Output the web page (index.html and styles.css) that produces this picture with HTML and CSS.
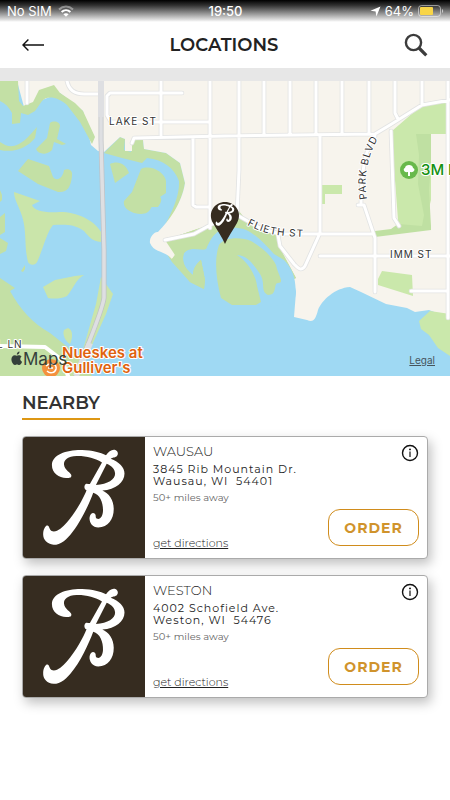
FILE: index.html
```html
<!DOCTYPE html>
<html lang="en">
<head>
    <meta charset="UTF-8">
    <meta name="viewport" content="width=device-width, initial-scale=1.0">
    <title>Locations</title>
    <link rel="stylesheet" href="styles.css">
</head>
<body>
    <svg class="defs" aria-hidden="true">
        <symbol id="logo" viewBox="9 23 363 363">
            <path fill-rule="evenodd" d="M152 144C128 153 95 138 95 108C95 76 140 62 185 63C215 64 240 70 256 79C264 67 274 60 284 63C292 66 293 76 289 80C285 86 276 84 270 89C295 98 311 115 311 133C311 160 285 180 245 184C264 192 279 212 279 238C279 270 262 293 233 294C215 294 206 278 207 265C208 252 217 248 222 252C228 257 223 262 228 267C238 272 246 262 247 245C248 220 238 195 218 190C205 225 180 280 150 315C130 338 115 346 100 345C80 343 68 330 69 312C70 299 75 290 80 288C88 286 86 299 94 304C108 310 125 295 140 278C165 250 190 205 198 183C190 180 190 168 196 164C200 162 204 165 208 164L244 100C225 88 195 80 168 81C142 82 130 93 131 106C132 124 153 130 153 139ZM258 104L226 167C262 165 283 151 283 134C283 120 272 110 258 104Z"/>
        </symbol>
        <symbol id="info" viewBox="0 0 18 18">
            <circle cx="9" cy="9" r="7.5" fill="none" stroke="#111" stroke-width="1.4"/>
            <circle cx="9" cy="5.4" r="0.9"/>
            <path d="M9 7.6V13" stroke="#111" stroke-width="1.2"/>
        </symbol>
    </svg>

    <div class="status-bar">
        <div class="carrier">
            <span>No SIM</span>
            <svg width="16" height="12" viewBox="0 0 16 12" fill="none" stroke="#fff" stroke-width="2">
                <path d="M1 4.4C5 .6 11 .6 15 4.4" opacity=".4"/>
                <path d="M3.6 7C6.2 4.6 9.8 4.6 12.4 7"/>
                <path d="M8 11.8L5.4 9.2C6.8 7.8 9.2 7.8 10.6 9.2Z" fill="#fff" stroke="none"/>
            </svg>
        </div>
        <div class="time">19:50</div>
        <div class="battery">
            <svg width="11" height="11" viewBox="0 0 11 11"><path d="M10.5 .5L6.4 10.6L5.6 5.6L.5 4.8Z" fill="#fff"/></svg>
            <span>64%</span>
            <svg width="26" height="12" viewBox="0 0 26 12">
                <rect x=".5" y=".5" width="22" height="11" rx="3" fill="none" stroke="#fff" stroke-opacity=".5"/>
                <rect x="2" y="2" width="13" height="8" rx="1" fill="#f8d548"/>
                <path d="M24 4C25.6 4.6 25.6 7.4 24 8Z" fill="#fff" opacity=".6"/>
            </svg>
        </div>
    </div>

    <header class="header">
        <button type="button" class="icon-btn" aria-label="Back">
            <svg width="22" height="12" viewBox="0 0 22 12" fill="none" stroke="#111" stroke-width="1.4"><path d="M22 6H1M6.4 .6L1 6L6.4 11.4"/></svg>
        </button>
        <h1>LOCATIONS</h1>
        <button type="button" class="icon-btn" aria-label="Search">
            <svg width="24" height="24" viewBox="0 0 24 24" fill="none" stroke="#3c3c3c"><circle cx="9.5" cy="9.5" r="7.6" stroke-width="2.4"/><path d="M15 15L22.3 22.3" stroke-width="3.2"/></svg>
        </button>
    </header>

    <div class="map">
        <svg viewBox="0 81 450 295">
            <rect y="81" width="450" height="295" fill="#9fd9f3"/>

            <!-- north-west shore -->
            <path fill="#f7f4ed" d="M17 81H104V152L98 151L91 145L83 111L60 93L24 107Z"/>
            <g fill="#c3e0a5">
                <path d="M0 81H18L19 101L23 106L33 102L39 90L54 85L60 93L75 103L83 111L95 137L92 144L80 122L67 105C58 97 47 95 42 101L35 111L28 115L21 113L20 123L12 124L12 113C9 107 5 103 0 101Z"/>
                <path d="M0 142C15 153 26 140 37 127L35 138C27 148 14 153 0 150Z"/>
                <path d="M50 123C54 120 60 122 60 126L57 139L66 144L62 145L54 142L52 150C46 156 38 154 36 149L47 138Z"/>
                <path d="M28 159L49 166L53 177C57 182 63 178 64 170C69 168 73 171 72 176C71 187 67 193 58 192L38 184L18 171Z"/>
                <path d="M0 190L2 195V200L0 202ZM0 217L5 213V232L0 235ZM0 238L8 243L6 251L0 254Z"/>
                <path d="M110 164C118 160 126 164 129 173L115 183Z"/>
                <path d="M141 169C150 164 165 172 166 181V193L157 199L151 208C148 214 143 215 134 213C126 210 123 206 124 201L132 192ZM157 196C163 196 162 202 158 207L151 207C155 203 155 199 157 196Z"/>
                <path d="M21 271L25 265V269L23 272Z"/>
                <path d="M0 278L15 288L10 291C20 309 32 323 50 333L84 360L92 376H0Z"/>
            </g>
            <g fill="#cae5aa">
                <path d="M14 192L40 201L32 205C34 211 45 213 60 212C77 212 94 220 101 232V242C92 241 89 237 84 231C73 223 62 225 53 225C47 232 44 246 38 260C36 266 30 266 28 262C24 247 27 231 22 216C18 204 14 199 14 192Z"/>
                <path d="M43 287L55 280L75 276L84 275C75 280 74 288 67 296C61 299 53 299 48 298Z"/>
                <path d="M68 328C73 330 73 337 70 344C66 342 62 335 64 330Z"/>
                <path d="M101 277L113 294L106 314L88 354L80 360L96 304Z"/>
            </g>

            <!-- main land -->
            <path fill="#c3e0a5" d="M104 153L120 137L125 139L124 150L131 152L132 140L143 140L144 149L166 153L180 163L185 183C182 203 170 221 158 236L167 230L215 215L250 214L272 228L294 260L300 285L288 285L278 269L272 254C260 241 245 229 233 228C216 228 212 236 206 249C198 251 190 246 184 253C180 264 189 272 193 275C193 269 196 264 201 260L205 280L204 289L190 282L172 262L158 240C163 226 180 203 179 181C174 168 164 160 147 158L142 163L122 158Z"/>
            <path fill="#f7f4ed" d="M104 81H450V318L429 310L415 312L407 308L386 304L361 292L350 287C335 288 322 300 318 310C315 322 312 322 307 320L294 317L296 292L293 279L296 278L286 260L276 244L238 217L212 224L165 240L172 247L175 255L172 259C164 250 154 253 150 243C149 237 155 231 158 232C169 221 182 203 185 183L180 163L166 153L144 149L143 140L132 140V151H125V139L120 137L104 152Z"/>
            <path fill="#c3e0a5" d="M165 240L212 224L238 210L248 222L276 232L280 248L296 278L292 280L282 259L272 253C262 240 248 228 233 228C216 228 212 236 206 249C198 250 190 246 184 253C180 264 189 272 193 275C193 269 196 264 201 260L205 280L204 289L190 282L172 259L175 255Z"/>
            <path fill="#9fd9f3" d="M231 228C249 225 263 242 274 254L284 260C296 272 295 284 296 292L294 303L270 307L260 307L245 290L225 245Z"/>
            <path fill="#c3e0a5" d="M219 245C225 237 241 237 251 241C261 247 272 256 276 265C278 275 285 283 278 283C273 283 278 295 268 295C260 291 266 284 260 274C252 262 246 255 237 255C247 261 256 275 257 286L261 302L256 305L232 305L221 298C216 279 214 259 219 245Z"/>

            <!-- parks -->
            <path fill="#cae8ab" d="M392 131L422 105L450 100V134H431V200L424 228L395 230L398 220L392 140Z"/>
            <path fill="#bfe0a2" d="M416 134H431V162L429 190L431 226V230L375 237V231L391 229L398 224L422 226L424 215L418 184L419 155Z"/>
            <path fill="#cae8ab" d="M322 185H342V194H325V204H322ZM382 271L412 275L413 296L378 285V279ZM430 311L450 314V356L438 348L429 335L421 329L419 321Z"/>

            <!-- roads -->
            <g fill="none" stroke-linecap="round" stroke-linejoin="round">
                <path stroke="#e2e3e3" stroke-width="4.6" d="M27 81V103M67 81C69 91 76 94 84 94H99M182 93H110L107 96V115L111 122H210M161 81V135M210 81V228M132 143L134 138L225 136L375 134L390 125L422 105L450 100M193 137V205L196 207H210M239 81V170L237 215M264 81V135M290 81V134M316 81V134M342 81V134M369 81V134M395 81V113L398 119M422 81V105M448 81V318M320 135V233L305 266C301 272 298 268 294 264L280 246L278 235M375 136C364 148 361 181 361 203M358 205H364L375 238V292M391 131L394 218L399 226M165 240L194 234L212 224L237 215L260 228L280 234H373M320 256H450M411 291H447"/>
                <path stroke="#fff" stroke-width="3" d="M27 81V103M67 81C69 91 76 94 84 94H99M182 93H110L107 96V115L111 122H210M161 81V135M210 81V228M132 143L134 138L225 136L375 134L390 125L422 105L450 100M193 137V205L196 207H210M239 81V170L237 215M264 81V135M290 81V134M316 81V134M342 81V134M369 81V134M395 81V113L398 119M422 81V105M448 81V318M320 135V233L305 266C301 272 298 268 294 264L280 246L278 235M375 136C364 148 361 181 361 203M358 205H364L375 238V292M391 131L394 218L399 226M165 240L194 234L212 224L237 215L260 228L280 234H373M320 256H450M411 291H447"/>
                <path stroke="#fff" stroke-width="4" d="M0 346L45 347L62 360L68 376"/>
                <path stroke="#bfc2c6" stroke-width="5" d="M101 81V140L104 250V298C102 312 92 333 76 376"/>
                <path stroke="#dedfe2" stroke-width="3.5" d="M101 81V140L104 250V298C102 312 92 333 76 376"/>
                <path stroke="#dedfe2" stroke-width="6" stroke-linecap="butt" d="M101 81V117M90 343L76 376"/>
            </g>

            <!-- labels -->
            <path id="park-blvd" d="M367 199C363 178 368 152 381 134" fill="none"/>
            <path id="flieth" d="M247 225C262 233 276 237 310 237" fill="none"/>
            <g class="street">
                <text x="109" y="125">LAKE ST</text>
                <text x="390" y="258">IMM ST</text>
                <text x="-3" y="348">L LN</text>
                <text><textPath href="#park-blvd">PARK BLVD</textPath></text>
                <text><textPath href="#flieth">FLIETH ST</textPath></text>
            </g>
            <circle cx="409" cy="170" r="9" fill="#68b94b"/>
            <path d="M408 176V172C403 173 403 168 405 168C405 164 413 164 413 168C416 169 414 173 410 172V176Z" fill="#fff"/>
            <text class="park" x="421" y="175">3M Park</text>

            <circle cx="51" cy="368" r="9" fill="#f4913e"/>
            <path d="M46 366C51 362 57 364 56 369C55 373 50 374 47 371M48 368H53" fill="none" stroke="#fff" stroke-width="1.5"/>
            <text class="place" x="62" y="358">Nueskes at</text>
            <text class="place" x="62" y="373">Gulliver's</text>

            <path fill="#34403a" d="M21.6 356.5C20.6 355.2 19.2 355 18.4 355.2C17.6 355.4 17.2 355.7 16.8 355.7C16.4 355.7 15.8 355.2 14.9 355.2C12.8 355.2 11.4 357 11.4 359.3C11.4 362 13.2 365 14.8 365C15.6 365 16 364.5 17 364.5C18 364.5 18.2 365 19.1 365C20.4 365 21.6 363.2 22.1 361.7C19.8 360.6 19.8 357.8 21.6 356.5ZM16.8 354.6C16.7 352.9 18 351.6 19.5 351.4C19.7 353.1 18.4 354.5 16.8 354.6Z"/>
            <text class="maps" x="23" y="365">Maps</text>

            <!-- store pin -->
            <path fill="#362c20" d="M225 244C222 237 217 230 213 223C207 212 215 202 225 202C235 202 243 212 237 223C233 230 228 237 225 244Z"/>
            <use href="#logo" x="211" y="201" width="28" height="28" fill="#fff"/>
        </svg>
        <a href="#legal" class="legal">Legal</a>
    </div>

    <main class="nearby">
        <h2>NEARBY</h2>

        <article class="card">
            <svg class="logo" viewBox="0 0 121 121" preserveAspectRatio="xMidYMid slice"><use href="#logo" width="121" height="121"/></svg>
            <div class="info">
                <h3>WAUSAU</h3>
                <address>3845 Rib Mountain Dr.<br>Wausau, WI&nbsp; 54401</address>
                <p>50+ miles away</p>
                <a href="#directions-wausau">get directions</a>
            </div>
            <div class="actions">
                <button type="button" class="icon-btn" aria-label="Store info"><svg width="18" height="18"><use href="#info"/></svg></button>
                <button type="button" class="order-btn">ORDER</button>
            </div>
        </article>

        <article class="card">
            <svg class="logo" viewBox="0 0 121 121" preserveAspectRatio="xMidYMid slice"><use href="#logo" width="121" height="121"/></svg>
            <div class="info">
                <h3>WESTON</h3>
                <address>4002 Schofield Ave.<br>Weston, WI&nbsp; 54476</address>
                <p>50+ miles away</p>
                <a href="#directions-weston">get directions</a>
            </div>
            <div class="actions">
                <button type="button" class="icon-btn" aria-label="Store info"><svg width="18" height="18"><use href="#info"/></svg></button>
                <button type="button" class="order-btn">ORDER</button>
            </div>
        </article>
    </main>
</body>
</html>
```
FILE: styles.css
```css
* {
    padding: 0;
    margin: 0;
    box-sizing: border-box;
}
body {
    font-family: Montserrat, Inter, sans-serif;
    background: #fff;
    color: #222;
}
button {
    font-family: inherit;
    background: none;
    border: none;
    cursor: pointer;
}
svg {
    display: block;
}
.defs {
    position: absolute;
    width: 0;
    height: 0;
}
.status-bar {
    height: 22px;
    padding: 0 6px 0 7px;
    display: grid;
    grid-template-columns: 1fr auto 1fr;
    align-items: center;
    background: linear-gradient(#000, #333 25%, #e0e0e0 90%, #fff);
    color: #fff;
    font: 13px Inter, sans-serif;
}
.carrier, .battery {
    display: flex;
    align-items: center;
    gap: 6px;
}
.battery {
    justify-content: flex-end;
    gap: 4px;
}
.time {
    font-weight: 500;
}
.header {
    height: 46px;
    padding: 0 22px;
    display: flex;
    align-items: center;
    justify-content: space-between;
}
.header h1 {
    font-size: 18px;
    font-weight: 600;
}
.map {
    position: relative;
    border-top: 13px solid #e7e7e7;
}
.map > svg {
    width: 100%;
    height: auto;
}
.map text {
    font-family: Inter, sans-serif;
    paint-order: stroke;
    stroke: #fff;
    stroke-width: 2px;
    stroke-linejoin: round;
}
.map .street {
    font-size: 10px;
    letter-spacing: 1px;
    fill: #333;
}
.map .park {
    font-size: 15px;
    font-weight: 500;
    fill: #149013;
}
.map .place {
    font-size: 15px;
    font-weight: 600;
    fill: #e0620d;
}
.map .maps {
    font-size: 17px;
    fill: #34403a;
    stroke: none;
}
.legal {
    position: absolute;
    right: 15px;
    bottom: 10px;
    color: #46545c;
    font: 10px Inter, sans-serif;
}
.nearby {
    padding: 14px 22px;
}
.nearby h2 {
    width: max-content;
    margin-bottom: 16px;
    padding-bottom: 2px;
    border-bottom: 2px solid #dd9714;
    font-size: 18px;
    font-weight: 600;
    line-height: 26px;
    color: #333;
}
.card {
    display: flex;
    height: 123px;
    margin-bottom: 16px;
    overflow: hidden;
    background: #fff;
    border: 1px solid #aaa;
    border-radius: 4px;
    box-shadow: 3px 5px 12px rgba(0, 0, 0, 0.25);
}
.logo {
    flex: none;
    width: 122px;
    height: 100%;
    background: #362c20;
    fill: #fff;
}
.info {
    flex: 1;
    display: flex;
    flex-direction: column;
    align-items: flex-start;
    padding: 5px 0 7px 8px;
    white-space: nowrap;
    font-weight: 400;
}
.info h3 {
    font-size: 13px;
    font-weight: 300;
    line-height: 18px;
}
.info address {
    margin-top: 3px;
    font-size: 11px;
    font-style: normal;
    line-height: 12px;
    letter-spacing: 1px;
}
.info p {
    margin-top: 3px;
    font-size: 10px;
    line-height: 16px;
    color: #666;
}
.info a {
    margin-top: auto;
    font-size: 11px;
    font-weight: 300;
    line-height: 16px;
    color: #222;
}
.actions {
    display: flex;
    flex-direction: column;
    align-items: flex-end;
    justify-content: space-between;
    padding: 7px 8px 12px 0;
}
.order-btn {
    width: 91px;
    height: 37px;
    border: 1px solid #d08c1c;
    border-radius: 12px;
    color: #d0932c;
    font-size: 14px;
    font-weight: 700;
    letter-spacing: 1px;
}
```
